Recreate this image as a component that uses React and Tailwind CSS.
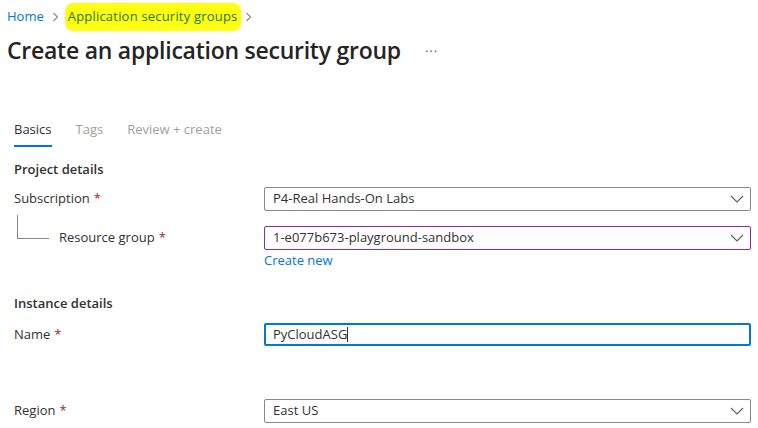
import React from "react";

function Chevron() {
  return (
    <svg width="14" height="8" viewBox="0 0 14 8" fill="none" className="shrink-0">
      <path d="M1 1l6 6 6-6" stroke="#605e5c" strokeWidth="1.1" />
    </svg>
  );
}

function Crumb() {
  return (
    <svg width="7" height="10" viewBox="0 0 7 10" fill="none">
      <path d="M1.5 1l4 4-4 4" stroke="#8a8886" strokeWidth="1.1" />
    </svg>
  );
}

function Req() {
  return <span className="text-[#a4262c] ml-1">*</span>;
}

function Select({ value, border = "border-[#8a8886]" }) {
  return (
    <div className={`h-[24px] w-[487px] shrink-0 border ${border} rounded-[2px] flex items-center justify-between pl-[8px] pr-[6px]`}>
      <span>{value}</span>
      <Chevron />
    </div>
  );
}

export default function App() {
  return (
    <div className="w-[758px] h-[428px] bg-white text-[#323130] text-[13px] overflow-hidden" style={{ fontFamily: '"Segoe UI", "Open Sans", sans-serif' }}>
      {/* breadcrumb */}
      <div className="flex items-center h-[34px] pl-[7px]">
        <a className="text-[#0078d4]">Home</a>
        <span className="ml-[8px] mr-[9px]"><Crumb /></span>
        <span className="bg-[#ffff14] text-[#1f7a10] rounded-[8px] px-[3px] py-[4px] -ml-[3px] tracking-[0.2px]">Application security groups</span>
        <span className="ml-[4px]"><Crumb /></span>
      </div>

      {/* title */}
      <div className="flex items-center pl-[7px] h-[32px]">
        <h1 className="text-[23px] tracking-[-0.25px] font-semibold leading-none text-[#252423]">Create an application security group</h1>
        <span className="ml-[24px] text-[#605e5c] text-[13px] tracking-[1px] mt-[4px]">···</span>
      </div>

      <div className="px-[14px]">
        {/* tabs */}
        <div className="flex gap-[24px] mt-[54px] h-[28px]">
          <div className="flex flex-col">
            <span className="text-[#323130]">Basics</span>
            <span className="h-[2px] bg-[#0078d4] mt-[5px]"></span>
          </div>
          <span className="text-[#a19f9d]">Tags</span>
          <span className="text-[#a19f9d]">Review + create</span>
        </div>

        <div className="font-semibold mt-[12px] h-[20px]">Project details</div>

        <div className="flex items-center mt-[7px]">
          <div className="w-[250px] shrink-0">Subscription<Req /></div>
          <Select value="P4-Real Hands-On Labs" />
        </div>

        <div className="flex items-center mt-[15px]">
          <div className="w-[250px] shrink-0 flex items-center relative">
            <div className="absolute left-[3px] -top-[13px] w-[32px] h-[24px] border-l border-b border-[#8a8886]"></div>
            <span className="pl-[45px]">Resource group<Req /></span>
          </div>
          <Select value="1-e077b673-playground-sandbox" border="border-[#8a2da5]" />
        </div>
        <div className="pl-[250px] text-[#0078d4] h-[20px] leading-[20px]">Create new</div>

        <div className="font-semibold mt-[24px] h-[20px]">Instance details</div>

        <div className="flex items-center mt-[9px]">
          <div className="w-[250px] shrink-0">Name<Req /></div>
          <div className="h-[23px] w-[487px] shrink-0 border-2 border-[#0078d4] rounded-[2px] flex items-center pl-[7px]">
            <span>PyCloudASG</span>
            <span className="w-px h-[15px] bg-[#323130]"></span>
          </div>
        </div>

        <div className="flex items-center mt-[53px]">
          <div className="w-[250px] shrink-0">Region<Req /></div>
          <Select value="East US" />
        </div>
      </div>
    </div>
  );
}
